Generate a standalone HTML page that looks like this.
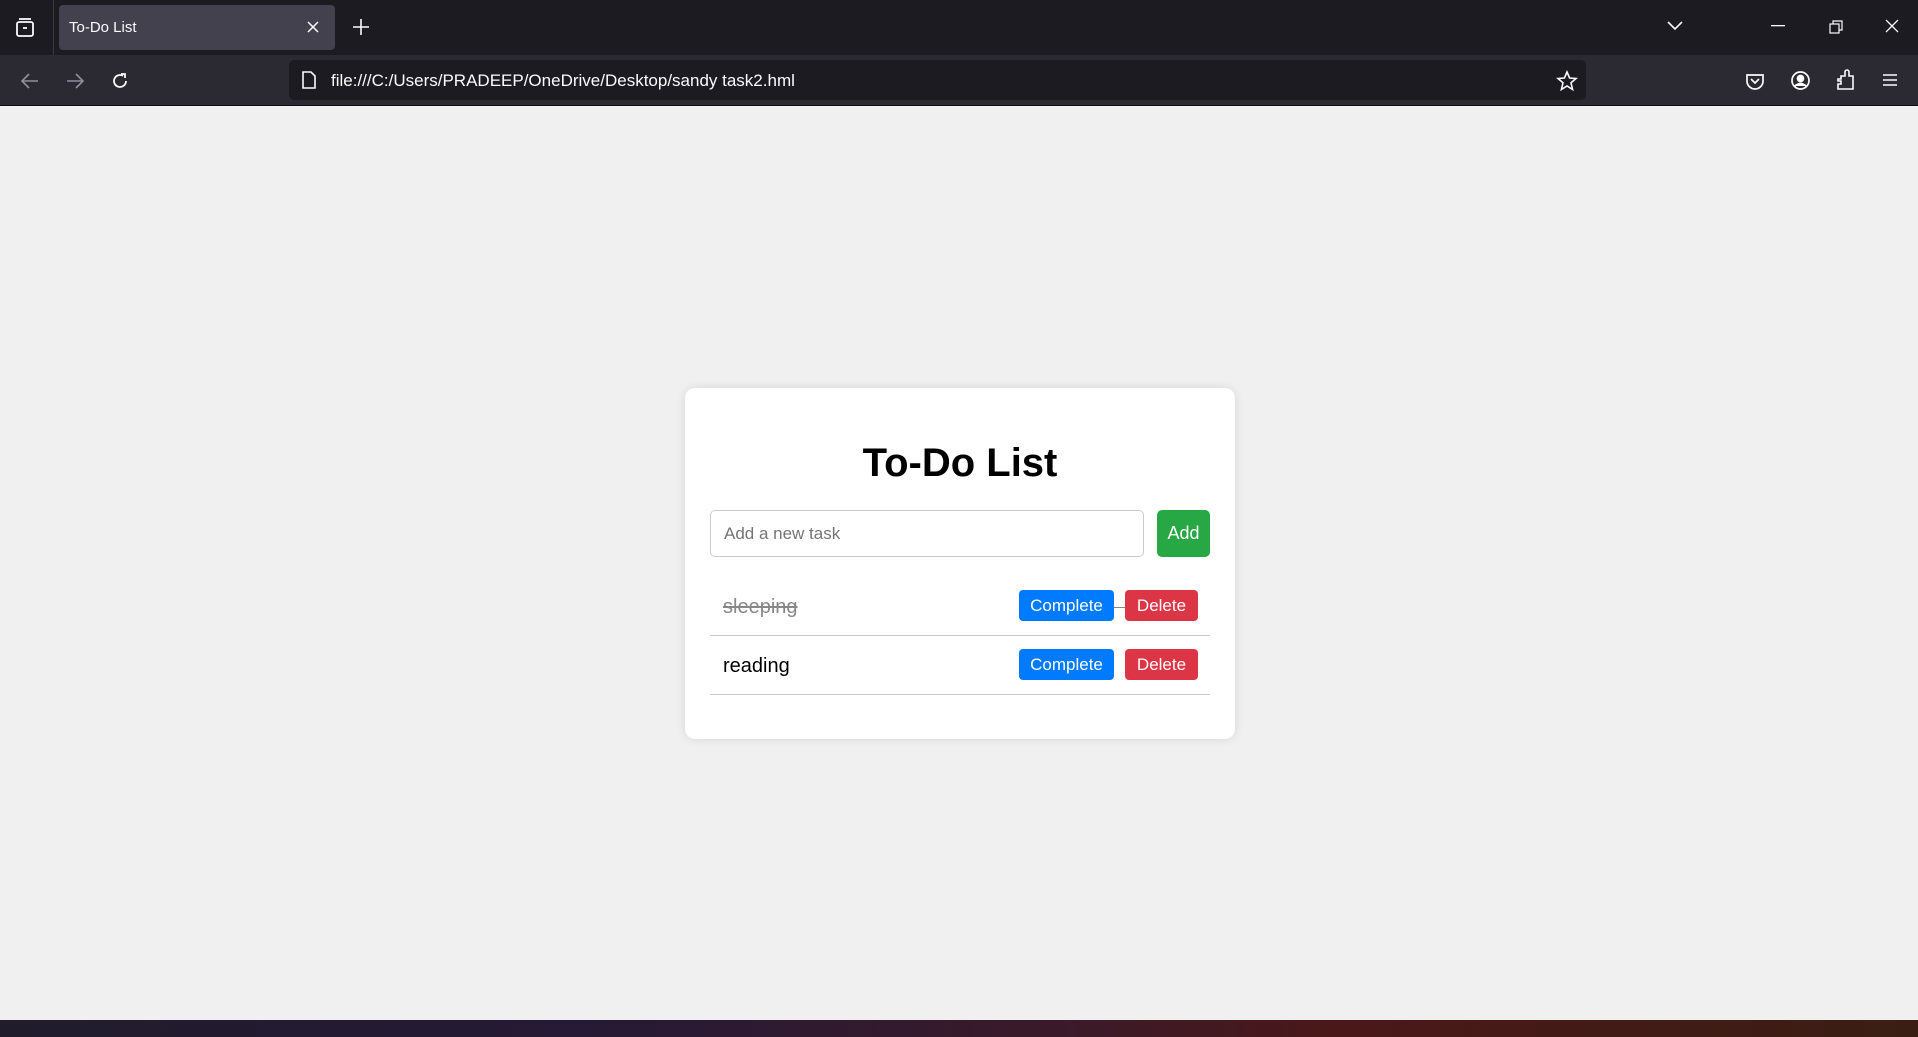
<!DOCTYPE html>
<html><head><meta charset="utf-8"><style>
*{margin:0;padding:0;box-sizing:border-box}
body{width:1918px;height:1037px;overflow:hidden;background:#f0f0f0;font-family:"Liberation Sans",Arial,sans-serif;position:relative}
.abs{position:absolute}
.tabbar{left:0;top:0;width:1918px;height:55px;background:#1c1b22}
.toolbar{left:0;top:55px;width:1918px;height:51px;background:#2b2a33;border-bottom:1px solid #0c0c0d}
.tab{left:59px;top:5px;width:276px;height:45px;background:#42414d;border-radius:4px;color:#fbfbfe;font-size:15px;line-height:45px;padding-left:10px}
.url{left:289px;top:60px;width:1297px;height:40px;background:#1c1b22;border-radius:5px;color:#fbfbfe;font-size:17px;line-height:42px;padding-left:42px}
.card{left:685px;top:388px;width:550px;height:351px;background:#fff;border-radius:10px;box-shadow:0 0 10px rgba(0,0,0,.1)}
h1{position:absolute;left:685px;width:550px;top:443px;line-height:40px;text-align:center;font-size:40px;font-weight:bold;color:#000}
.input{left:710px;top:510px;width:434px;height:47px;border:1px solid #ccc;border-radius:5px;font-size:17px;color:#757575;line-height:45px;padding-left:13px}
.add{left:1157px;top:510px;width:53px;height:47px;background:#28a745;border-radius:5px;color:#fff;font-size:18px;line-height:47px;text-align:center}
.btn{height:31px;border-radius:4px;color:#fff;font-size:17px;line-height:31px;text-align:center}
.c{background:#007bff;left:1019px;width:95px}
.d{background:#dc3545;left:1125px;width:73px}
.sep{left:710px;width:500px;height:1px;background:#ccc}
.task{left:723px;font-size:20px;line-height:20px}
.task-bar{left:0;top:1020px;width:1918px;height:17px;background:linear-gradient(90deg,#201c2c 0%,#261a36 30%,#3a1a2a 55%,#4a1818 70%,#3a1e14 100%)}
svg{position:absolute}
</style></head><body>
<div class="abs tabbar"></div>
<svg style="left:14px;top:17px" width="22" height="22" viewBox="0 0 22 22" fill="none" stroke="#fbfbfe" stroke-width="1.8"><rect x="3" y="5" width="16" height="14" rx="2"/><line x1="5" y1="2" x2="17" y2="2"/><line x1="9" y1="11" x2="13" y2="11"/></svg>
<div class="abs" style="left:53px;top:0;width:1px;height:55px;background:#3a3944"></div>
<div class="abs tab">To-Do List</div>
<svg style="left:306px;top:20px" width="14" height="14" viewBox="0 0 14 14" stroke="#fbfbfe" stroke-width="1.5"><path d="M2 2L12 12M12 2L2 12"/></svg>
<svg style="left:352px;top:18px" width="18" height="18" viewBox="0 0 18 18" stroke="#fbfbfe" stroke-width="1.6"><path d="M9 1V17M1 9H17"/></svg>
<svg style="left:1666px;top:20px" width="18" height="12" viewBox="0 0 18 12" fill="none" stroke="#fbfbfe" stroke-width="1.6"><path d="M2 2L9 9L16 2"/></svg>
<svg style="left:1771px;top:25px" width="14" height="2"><rect width="14" height="1.3" fill="#fbfbfe"/></svg>
<svg style="left:1829px;top:20px" width="14" height="14" viewBox="0 0 14 14" fill="none" stroke="#fbfbfe" stroke-width="1.2"><rect x="1" y="4" width="9" height="9"/><path d="M4 4V1H13V10H10"/></svg>
<svg style="left:1885px;top:19px" width="14" height="14" viewBox="0 0 14 14" stroke="#fbfbfe" stroke-width="1.3"><path d="M1 1L13 13M13 1L1 13"/></svg>
<div class="abs toolbar"></div>
<svg style="left:20px;top:72px" width="20" height="18" viewBox="0 0 20 18" fill="none" stroke="#8f8f9d" stroke-width="1.6"><path d="M18 9H3M9 2L2 9L9 16"/></svg>
<svg style="left:65px;top:72px" width="20" height="18" viewBox="0 0 20 18" fill="none" stroke="#8f8f9d" stroke-width="1.6"><path d="M2 9H17M11 2L18 9L11 16"/></svg>
<svg style="left:110px;top:71px" width="20" height="20" viewBox="0 0 20 20" fill="none" stroke="#fbfbfe" stroke-width="1.8"><path d="M16 10A6 6 0 1 1 13 4.8"/><path d="M11 3H15V7"/></svg>
<div class="abs url">file:///C:/Users/PRADEEP/OneDrive/Desktop/sandy task2.hml</div>
<svg style="left:301px;top:71px" width="16" height="18" viewBox="0 0 16 18" fill="none" stroke="#fbfbfe" stroke-width="1.6"><path d="M2 1H10L14 5V17H2Z"/></svg>
<svg style="left:1556px;top:70px" width="22" height="22" viewBox="0 0 22 22" fill="none" stroke="#fbfbfe" stroke-width="1.6"><path d="M11 2L13.6 8L20 8.5L15 12.8L16.6 19.5L11 16L5.4 19.5L7 12.8L2 8.5L8.4 8Z"/></svg>
<svg style="left:1745px;top:71px" width="20" height="20" viewBox="0 0 20 20" fill="none" stroke="#fbfbfe" stroke-width="1.7"><path d="M2 4H18V10A8 8 0 0 1 2 10Z"/><path d="M6 8L10 12L14 8"/></svg>
<svg style="left:1790px;top:70px" width="21" height="21" viewBox="0 0 21 21" fill="none" stroke="#fbfbfe" stroke-width="1.7"><circle cx="10.5" cy="10.5" r="8.5"/><circle cx="10.5" cy="8.5" r="3" fill="#fbfbfe"/><path d="M5 16Q10.5 11 16 16" fill="#fbfbfe"/></svg>
<svg style="left:1836px;top:69px" width="20" height="22" viewBox="0 0 20 22" fill="none" stroke="#fbfbfe" stroke-width="1.6"><path d="M2 10H5V7H9V3A2 2 0 0 1 13 3V7H17V20H2V15H5V12H2Z"/></svg>
<svg style="left:1882px;top:72px" width="16" height="16" viewBox="0 0 16 16" stroke="#fbfbfe" stroke-width="1.6"><path d="M1 3H15M1 8H15M1 13H15"/></svg>

<div class="abs card"></div>
<h1>To-Do List</h1>
<div class="abs input">Add a new task</div>
<div class="abs add">Add</div>
<div class="abs task" style="top:597px;color:#888;text-decoration:line-through">sleeping</div>
<div class="abs" style="left:1114px;top:607px;width:11px;height:1px;background:#888"></div>
<div class="abs btn c" style="top:590px">Complete</div>
<div class="abs btn d" style="top:590px">Delete</div>
<div class="abs sep" style="top:635px"></div>
<div class="abs task" style="top:656px;color:#000">reading</div>
<div class="abs btn c" style="top:649px">Complete</div>
<div class="abs btn d" style="top:649px">Delete</div>
<div class="abs sep" style="top:694px"></div>
<div class="abs task-bar"></div>
</body></html>
